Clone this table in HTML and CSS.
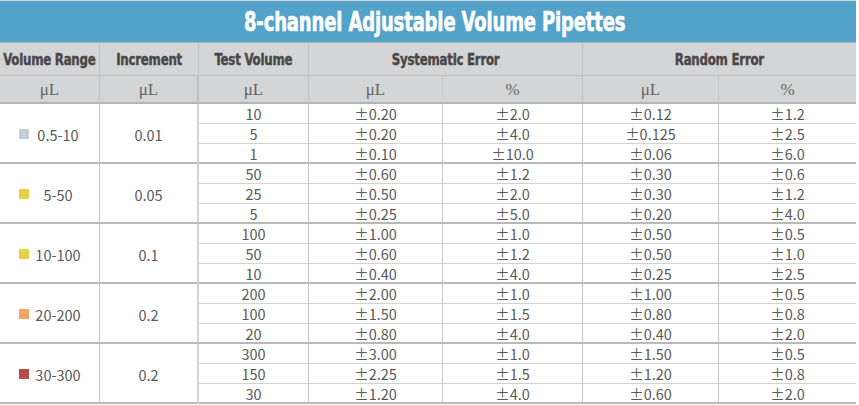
FILE: index.html
```html
<!DOCTYPE html>
<html lang="en">
<head>
<meta charset="utf-8">
<title>8-channel Adjustable Volume Pipettes</title>
<link rel="stylesheet" href="styles.css">
</head>
<body>
<div class="sheet">
  <div class="title"><span class="title-text">8-channel Adjustable Volume Pipettes</span></div>
  <div class="grid">
    <div class="hd"><span class="cond">Volume Range</span></div>
    <div class="hd"><span class="cond">Increment</span></div>
    <div class="hd"><span class="cond">Test Volume</span></div>
    <div class="hd span2"><span class="cond">Systematic Error</span></div>
    <div class="hd span2 last"><span class="cond">Random Error</span></div>

    <div class="unit">μL</div>
    <div class="unit c2">μL</div>
    <div class="unit">μL</div>
    <div class="unit sub">μL</div>
    <div class="unit">%</div>
    <div class="unit sub">μL</div>
    <div class="unit last">%</div>

    <!-- block 1 -->
    <div class="range"><i class="sq s1"></i><span>0.5-10</span></div>
    <div class="inc">0.01</div>
    <div class="d">10</div><div class="d">±0.20</div><div class="d">±2.0</div><div class="d">±0.12</div><div class="d last">±1.2</div>
    <div class="d">5</div><div class="d">±0.20</div><div class="d">±4.0</div><div class="d">±0.125</div><div class="d last">±2.5</div>
    <div class="d end">1</div><div class="d end">±0.10</div><div class="d end">±10.0</div><div class="d end">±0.06</div><div class="d end last">±6.0</div>

    <!-- block 2 -->
    <div class="range"><i class="sq s2"></i><span>5-50</span></div>
    <div class="inc">0.05</div>
    <div class="d">50</div><div class="d">±0.60</div><div class="d">±1.2</div><div class="d">±0.30</div><div class="d last">±0.6</div>
    <div class="d">25</div><div class="d">±0.50</div><div class="d">±2.0</div><div class="d">±0.30</div><div class="d last">±1.2</div>
    <div class="d end">5</div><div class="d end">±0.25</div><div class="d end">±5.0</div><div class="d end">±0.20</div><div class="d end last">±4.0</div>

    <!-- block 3 -->
    <div class="range"><i class="sq s3"></i><span>10-100</span></div>
    <div class="inc">0.1</div>
    <div class="d">100</div><div class="d">±1.00</div><div class="d">±1.0</div><div class="d">±0.50</div><div class="d last">±0.5</div>
    <div class="d">50</div><div class="d">±0.60</div><div class="d">±1.2</div><div class="d">±0.50</div><div class="d last">±1.0</div>
    <div class="d end">10</div><div class="d end">±0.40</div><div class="d end">±4.0</div><div class="d end">±0.25</div><div class="d end last">±2.5</div>

    <!-- block 4 -->
    <div class="range"><i class="sq s4"></i><span>20-200</span></div>
    <div class="inc">0.2</div>
    <div class="d">200</div><div class="d">±2.00</div><div class="d">±1.0</div><div class="d">±1.00</div><div class="d last">±0.5</div>
    <div class="d">100</div><div class="d">±1.50</div><div class="d">±1.5</div><div class="d">±0.80</div><div class="d last">±0.8</div>
    <div class="d end">20</div><div class="d end">±0.80</div><div class="d end">±4.0</div><div class="d end">±0.40</div><div class="d end last">±2.0</div>

    <!-- block 5 -->
    <div class="range"><i class="sq s5"></i><span>30-300</span></div>
    <div class="inc">0.2</div>
    <div class="d">300</div><div class="d">±3.00</div><div class="d">±1.0</div><div class="d">±1.50</div><div class="d last">±0.5</div>
    <div class="d">150</div><div class="d">±2.25</div><div class="d">±1.5</div><div class="d">±1.20</div><div class="d last">±0.8</div>
    <div class="d end">30</div><div class="d end">±1.20</div><div class="d end">±4.0</div><div class="d end">±0.60</div><div class="d end last">±2.0</div>
  </div>
</div>
</body>
</html>
```
FILE: styles.css
```css
* { box-sizing: border-box; }
html, body { margin: 0; padding: 0; background: #fff; }

.sheet {
  width: 856px;
}

.title {
  height: 43px;
  background: #52a2c9;
  border-top: 1px solid #cfd3d6;
  border-bottom: 1px solid #a6b1ba;
  display: flex;
  align-items: center;
  justify-content: center;
  overflow: hidden;
}
.title-text {
  display: inline-block;
  font-family: "DejaVu Sans Condensed", "DejaVu Sans", sans-serif;
  font-weight: bold;
  font-stretch: condensed;
  font-size: 26px;
  color: #fff;
  -webkit-text-stroke: 0.6px #fff;
  transform: scaleX(0.77);
  letter-spacing: -0.2px;
  margin-left: 14px;
  padding-top: 1px;
}

.grid {
  display: grid;
  grid-template-columns: 100px 99px 110px 134px 140px 136px 137px;
  grid-template-rows: 33px 28px repeat(15, 20px);
}

.grid > div {
  display: flex;
  align-items: center;
  justify-content: center;
  border-right: 1px solid #c4c4c4;
  border-bottom: 1px solid #d2d2d2;
  white-space: nowrap;
}
.grid > div.last { border-right: none; }

.hd {
  background: #d4d5d7;
  border-bottom-color: #bfc0c2 !important;
  border-right-color: #bfc0c2 !important;
}
.span2 { grid-column: span 2; }
.cond {
  display: inline-block;
  font-family: "DejaVu Sans Condensed", "DejaVu Sans", sans-serif;
  font-weight: bold;
  font-stretch: condensed;
  font-size: 16px;
  color: #4b4747;
  -webkit-text-stroke: 0.45px #4b4747;
  transform: scaleX(0.82);
  letter-spacing: -0.3px;
}

.unit {
  background: #d4d5d7;
  border-bottom: 2px solid #b4b5b7 !important;
  border-right-color: #bfc0c2 !important;
  font-family: "Liberation Serif", serif;
  font-size: 17px;
  color: #666;
  padding-top: 1px;
}
.unit.sub { border-right-color: #c9cacc !important; }

.grid > .c2, .grid > .inc { border-right: 2px solid #d4d4d4; }

.range, .inc {
  grid-row: span 3;
  border-bottom: 2px solid #b9b9b9 !important;
  padding-top: 2px;
}

.range, .inc, .d {
  font-family: "Noto Sans CJK SC", "Noto Sans", sans-serif;
  font-size: 14.5px;
  color: #595959;
}

.grid > .range {
  justify-content: flex-start;
  padding-left: 19px;
}
.range span {
  flex: 1;
  text-align: center;
  padding-right: 12px;
}
.sq {
  display: block;
  width: 10px;
  height: 10px;
  flex: none;
}
.s1 { background: #c2ccd5; }
.s2 { background: #e7d048; }
.s3 { background: #e7d048; }
.s4 { background: #f1a565; }
.s5 { background: #b84a4a; }

.d { line-height: 19px; }
.grid > .end { border-bottom: 2px solid #b9b9b9; }
```
